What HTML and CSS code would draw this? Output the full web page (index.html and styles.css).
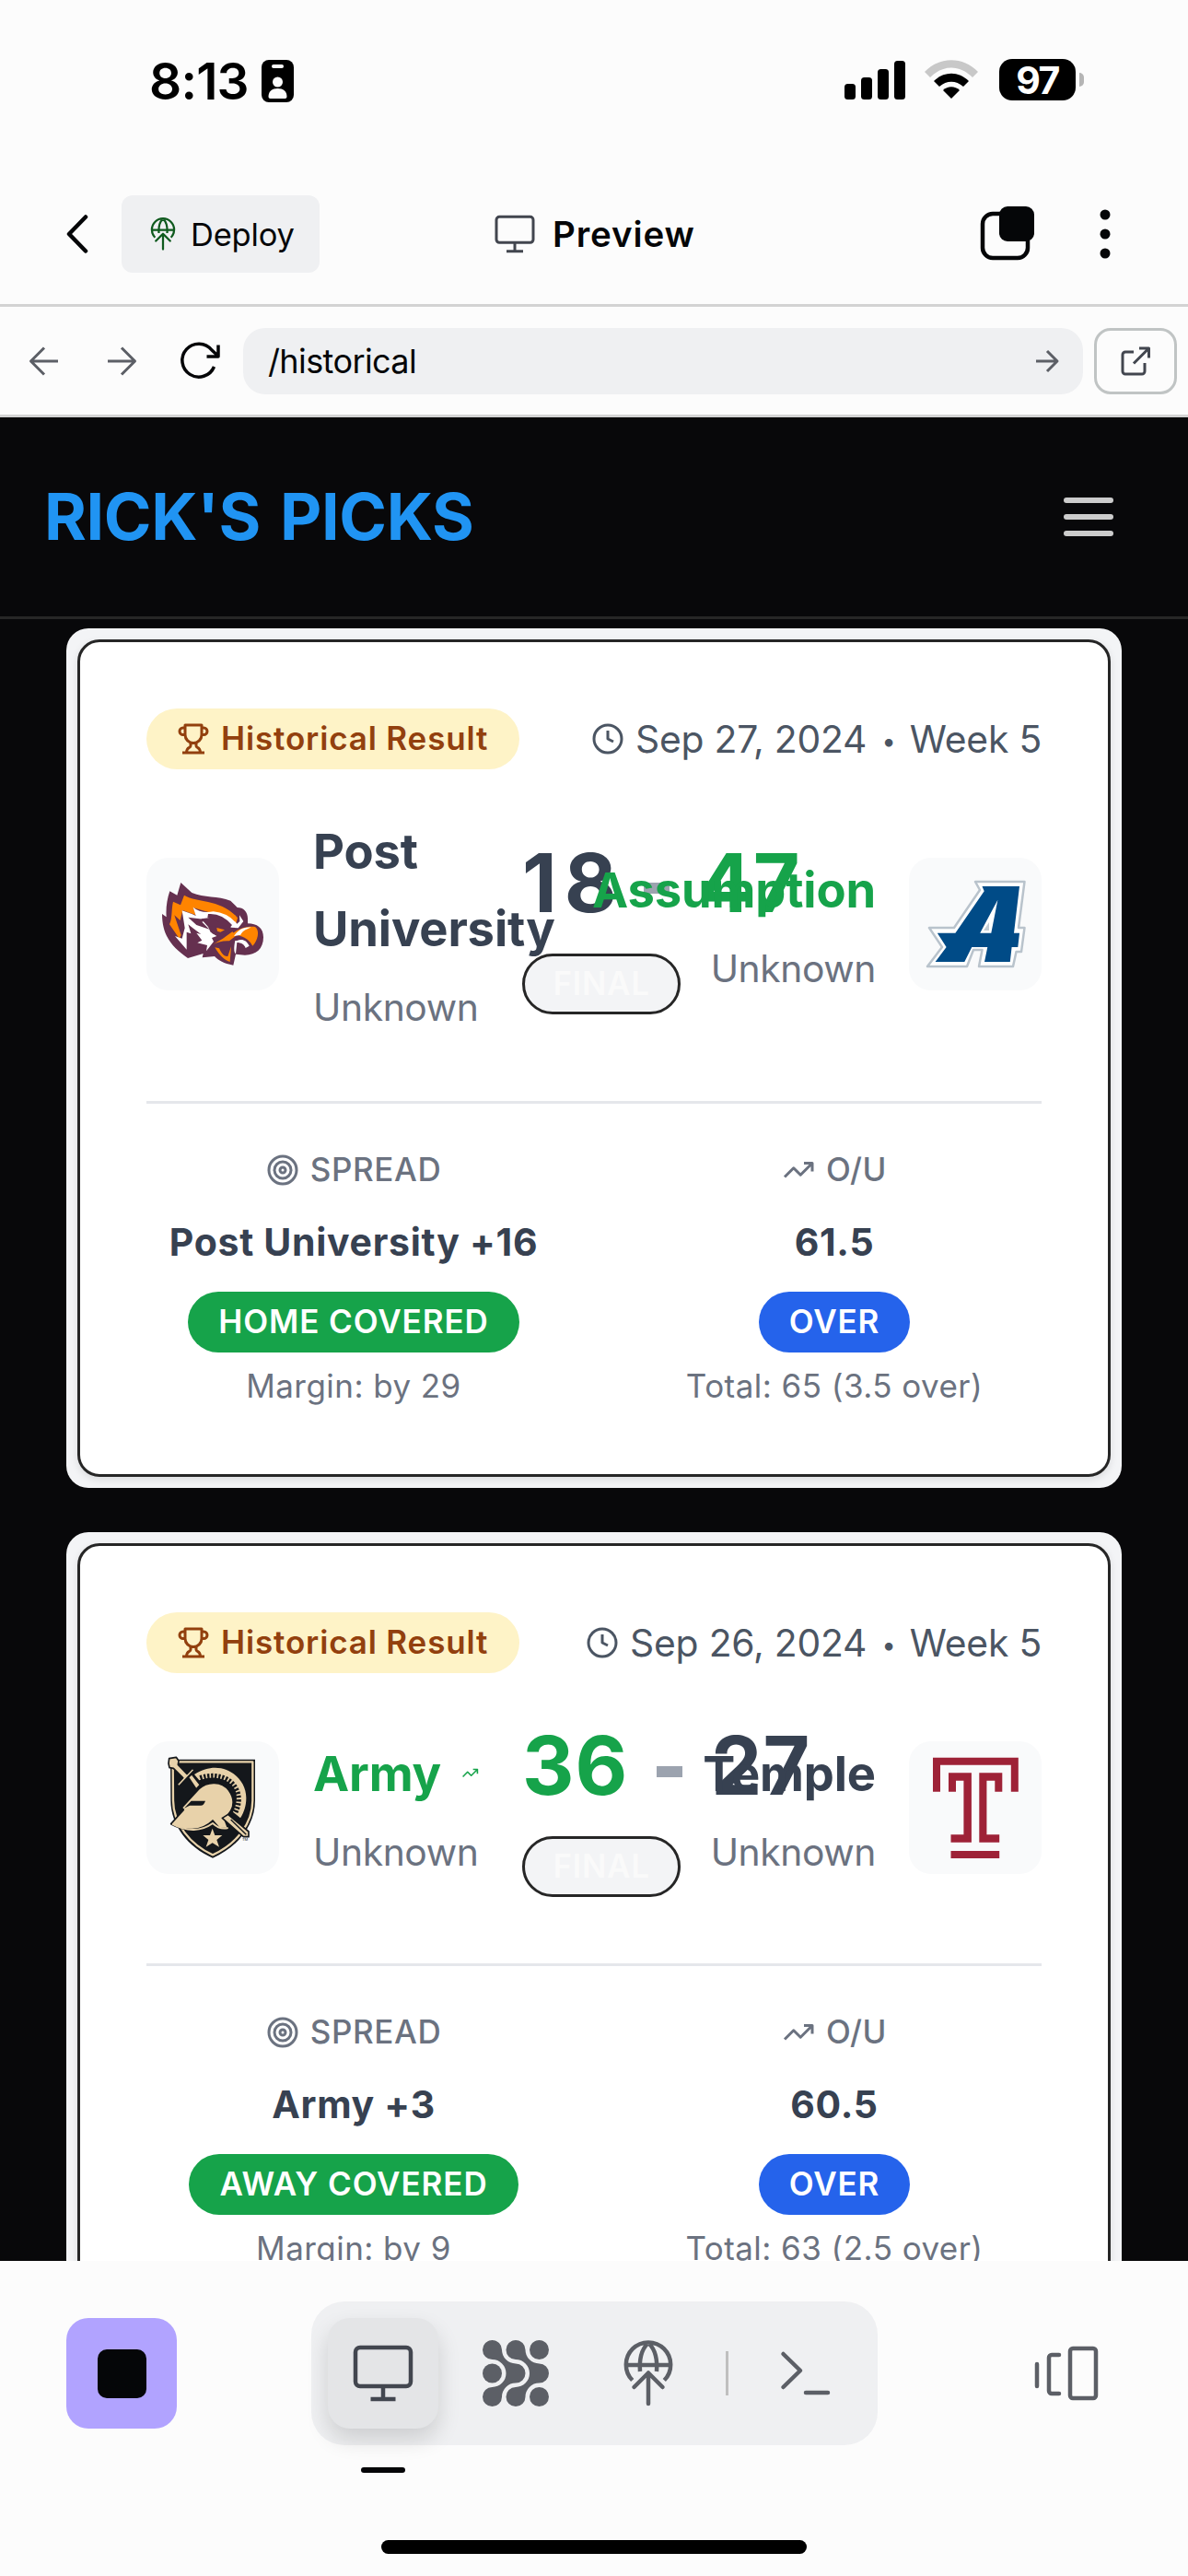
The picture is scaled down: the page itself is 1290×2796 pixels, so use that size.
FILE: index.html
```html
<!DOCTYPE html>
<html lang="en">
<head>
<meta charset="utf-8">
<title>Rick's Picks</title>
<link rel="stylesheet" href="styles.css">
</head>
<body>
<svg width="0" height="0" class="defs">
  <symbol id="trophy" viewBox="0 0 24 24"><path d="M6 9H4.5a2.5 2.5 0 0 1 0-5H6M18 9h1.5a2.500 2.500 0 0 0 0-5H18M4 22h16M10 14.660V17c0 .55-.47.98-.97 1.210C7.850 18.750 7 20.240 7 22M14 14.660V17c0 .55.47.98.97 1.210C16.150 18.750 17 20.240 17 22M18 2H6v7a6 6 0 0 0 12 0V2Z"/></symbol>
  <symbol id="clock" viewBox="0 0 24 24"><circle cx="12" cy="12" r="10"/><path d="M12 6v6l4 2"/></symbol>
  <symbol id="target" viewBox="0 0 24 24"><circle cx="12" cy="12" r="10"/><circle cx="12" cy="12" r="6"/><circle cx="12" cy="12" r="2"/></symbol>
  <symbol id="trend" viewBox="0 0 24 24"><path d="M22 7l-8.500 8.500-5-5L2 17M16 7h6v6"/></symbol>
  <symbol id="globe" viewBox="0 0 72 72"><path d="M18.700 43.500A24.200 24.200 0 1 1 53.300 43.500M12 27h48M35 4C29 10 26 20 27 34M37 4c6 6 9 16 8 30"/><path stroke-linecap="round" d="M36 69V35.500M20.500 51L36 35.500 51.500 51"/></symbol>
  <symbol id="monitor" viewBox="0 0 72 72"><rect x="6" y="8" width="60" height="42" rx="5"/><path d="M36 50v13M22.500 64h27"/></symbol>
</svg>

<div class="status">
  <div class="time">8:13
    <svg class="idcard" width="35" height="46" viewBox="0 0 35 46"><rect width="35" height="46" rx="8"/><rect x="11" y="5" width="13" height="4" rx="2" fill="#fcfcfc"/><circle cx="17.500" cy="24" r="5.500" fill="#fcfcfc"/><path d="M7.500 40c0-6 4-9 10-9s10 3 10 9c0 1-1 2-2 2h-16c-1 0-2-1-2-2z" fill="#fcfcfc"/></svg>
  </div>
  <div class="signals">
    <svg width="66" height="42" viewBox="0 0 66 42"><rect y="25" width="12" height="17" rx="3.500"/><rect x="18" y="18" width="12" height="24" rx="3.500"/><rect x="36" y="9" width="12" height="33" rx="3.500"/><rect x="54" width="12" height="42" rx="3.500"/></svg>
    <svg class="wifi" width="58" height="43" viewBox="0 0 58 43"><path fill="#c8c8c8" d="M0 13C16-4 42-4 58 13l-6 6C38 5 20 5 6 19z"/><path d="M10 23c11-11 27-11 38 0l-6 6c-8-7-18-7-26 0z"/><path d="M20 33c5-5 13-5 18 0l-9 9z"/></svg>
    <div class="battery">97</div><i class="nub"></i>
  </div>
</div>

<div class="toolbar">
  <svg class="back" width="24" height="42" viewBox="0 0 24 42"><path d="M21 2.500L3 21l18 18.500"/></svg>
  <div class="deploy"><svg class="g" width="36" height="36"><use href="#globe"/></svg><span>Deploy</span></div>
  <div class="preview"><svg width="48" height="48"><use href="#monitor"/></svg><span>Preview</span></div>
  <svg class="tabs" width="60" height="60" viewBox="0 0 60 60"><rect x="3" y="8" width="49" height="48" rx="11"/><rect x="21" y="0" width="38" height="38" rx="9" fill="#050608" stroke="none"/></svg>
  <svg class="dots" width="12" height="60" viewBox="0 0 12 60"><circle cx="6" cy="9" r="5.500"/><circle cx="6" cy="30" r="5.500"/><circle cx="6" cy="51" r="5.500"/></svg>
</div>

<div class="address">
  <svg class="a1" width="32" height="32" viewBox="0 0 32 32"><path d="M31 16H2M16 1.500L1.500 16 16 30.500"/></svg>
  <svg class="a2" width="32" height="32" viewBox="0 0 32 32"><path d="M1 16h29M16 1.500L30.500 16 16 30.500"/></svg>
  <svg class="a3" width="46" height="42" viewBox="0 0 46 42"><path d="M38.500 27A18 18 0 1 1 36 9L43 15.500M43 3.500V16H30.500"/></svg>
  <div class="field"><span>/historical</span><svg width="24" height="24" viewBox="0 0 24 24"><path d="M0 12h22M12 1l11 11-11 11"/></svg></div>
  <div class="open"><svg width="32" height="32" viewBox="0 0 32 32"><path d="M14 6H5a3 3 0 0 0-3 3v18a3 3 0 0 0 3 3h18a3 3 0 0 0 3-3v-9M20 2h10.500v10.500M30 2.500L14 18.500"/></svg></div>
</div>

<header class="site">
  <h1>RICK'S PICKS</h1>
  <div class="menu"><i></i><i></i><i></i></div>
</header>

<main>
  <section class="frame"><div class="card">
    <div class="top">
      <div class="badge"><svg width="36" height="36"><use href="#trophy"/></svg><span>Historical Result</span></div>
      <div class="date"><svg width="36" height="36"><use href="#clock"/></svg><span>Sep 27, 2024 <em>•</em> Week 5</span></div>
    </div>
    <div class="match tall">
      <div class="team">
        <div class="logo"><svg width="144" height="144" viewBox="27 33 432 432">
          <path fill="#65304f" d="M139 114l36 33c40 17 85 10 126 26l22 22c20 0 34 14 34 35v17c30 0 51 14 51 45 0 38-24 58-60 58l-30-3-8 36c-32-6-47-15-61-29l-40 4 3-13-50 15C110 324 78 286 78 216l14 10c-2-30 2-58 11-84l24 13z"/>
          <path fill="#ff8400" d="M150 155C188 180 272 166 324 229L318 250 290 228 180 196 188 220 145 204 137 237 118 220 140 285 134 296 102 250C112 230 108 200 114 176L138 187Z"/>
          <path fill="#fff" d="M143 205L175 216 188 222 179 194Q205 216 245 208Q292 212 322 248L331 240 330 220 343 240 326 262 303 260 270 236 235 228 205 232 228 258 236 275 256 288 240 294 246 306 222 337 225 318 193 310 208 302 190 278 205 282 176 260 163 250 172 280 158 275 158 332 120 288 143 296 152 262Z"/>
          <path fill="#65304f" d="M163 227L225 235 208 242 232 266 190 252ZM228 216Q272 212 306 252L298 262 282 260Q262 236 226 228ZM232 257L302 257 290 277 270 291 242 280Z"/>
          <path fill="#ff8400" d="M306 282C323 265 352 255 381 258C396 268 392 300 373 320C360 296 337 285 306 282ZM240 317L276 296 307 274 320 286 297 304C274 303 257 308 240 317ZM250 325L264 328C272 346 282 356 292 354L303 322 299 372C279 365 266 352 250 325ZM256 261L282 268 268 275 258 272Z"/>
          <path fill="#fff" d="M322 303C338 296 352 300 362 320L350 327C346 315 335 309 322 309L318 346C311 341 312 323 316 303ZM312 288C326 268 342 257 368 260C348 266 338 274 334 284Z"/>
        </svg></div>
        <div class="info"><div class="name">Post<br>University</div><div class="conf">Unknown</div></div>
      </div>
      <div class="score"><div class="nums"><span class="narrow">18</span><i></i><span class="win">47</span></div><div class="final">FINAL</div></div>
      <div class="team right">
        <div class="info"><div class="name win">Assumption</div><div class="conf">Unknown</div></div>
        <div class="logo"><svg width="144" height="144" viewBox="0 0 144 144">
          <path fill="#fff" stroke="#b9c3cc" stroke-width="2.500" d="M72 26H125.500L119 76H125.500L122 102H116.500L113 118H76L79.500 100H70L63 118H20L36 97 22 76H49L77 35Z"/>
          <path fill="#004b87" fill-rule="evenodd" d="M79.500 31H120L114 81.700H120L118.300 97H111.600L109.800 113H82L85.300 97H68.300L60.300 113H28.600L40.600 97 30.800 81.700H50.400L81.700 36.300ZM96.400 45.700L77.200 81.700H89.300Z"/><path fill="#c3ccd4" d="M87 70l-6 9h6z"/>
        </svg></div>
      </div>
    </div>
    <div class="stats">
      <div class="col"><div class="label"><svg width="36" height="36"><use href="#target"/></svg><span>SPREAD</span></div><div class="value">Post University +16</div><div class="pill green">HOME COVERED</div><div class="note">Margin: by 29</div></div>
      <div class="col"><div class="label"><svg width="36" height="36"><use href="#trend"/></svg><span>O/U</span></div><div class="value">61.5</div><div class="pill blue">OVER</div><div class="note">Total: 65 (3.5 over)</div></div>
    </div>
  </div></section>

  <section class="frame"><div class="card">
    <div class="top">
      <div class="badge"><svg width="36" height="36"><use href="#trophy"/></svg><span>Historical Result</span></div>
      <div class="date"><svg width="36" height="36"><use href="#clock"/></svg><span>Sep 26, 2024 <em>•</em> Week 5</span></div>
    </div>
    <div class="match">
      <div class="team">
        <div class="logo"><svg width="144" height="144" viewBox="27 30 432 432">
          <path fill="#14171b" d="M105 89H381V223C381 303 326 374 243 410C163 376 106 303 106 223Z"/>
          <path fill="none" stroke="#e8d2aa" stroke-width="7" d="M113 97H373V223C373 297 322 363 243 400C169 366 114 297 114 223Z"/>
          <path fill="#e8d2aa" d="M183 138C270 82 353 145 352 215c0 25-7 45-19 65l-24-20c29-60 2-104-55-111-22-1-38 3-55 8z"/>
          <path fill="none" stroke="#14171b" stroke-width="17" stroke-dasharray="7 5" d="M202 150c65-22 124 10 125 70 0 15-4 28-10 41"/>
          <path fill="#e8d2aa" stroke="#14171b" stroke-width="5" d="M107 299L148 253 142 246 198 185C226 158 273 160 295 189c23 32 17 65-14 92l12 33-28-1-22-25c-38 36-91 37-136 11z"/>
          <path fill="#14171b" d="M173 224h46c-3 9-8 15-15 15h-36l-18 9z"/>
          <path fill="none" stroke="#e8d2aa" stroke-width="6" d="M111 299c49 27 96 24 132-2 17 16 31 20 50 15"/>
          <path fill="#e8d2aa" stroke="#14171b" stroke-width="5" d="M101 86l23-4 8 12-2 12 29 30 17-18 8 5-51 54-7-6 20-22-31-31-13-2-3-14zM163 147l12-10 27 35-13 14zM274 280l19-12 67 56v17h-17z"/>
          <path stroke="#14171b" stroke-width="4" d="M302 285l50 49"/>
          <path fill="#e8d2aa" d="M242 314l8 22h24l-18 15 8 23-22-13-21 13 8-23-18-15h23z"/>
          <text x="339" y="355" font-family="Inter, sans-serif" font-size="12" fill="#14171b">TM</text>
        </svg></div>
        <div class="info"><div class="name win">Army<svg class="up" width="19" height="19"><use href="#trend"/></svg></div><div class="conf">Unknown</div></div>
      </div>
      <div class="score"><div class="nums"><span class="win">36</span><i></i><span>27</span></div><div class="final">FINAL</div></div>
      <div class="team right">
        <div class="info"><div class="name">Temple</div><div class="conf">Unknown</div></div>
        <div class="logo"><svg width="144" height="144" viewBox="0 0 144 144"><path fill="#9e2237" d="M26 17.700H118.800V54.700H110.800V25.700H34V54.700H26ZM43 34.300H67.900V109.700H45.500V101.300H59.400V42.700H51V54.700H43ZM76.300 34.300H101.300V54.700H93.300V42.700H84.400V101.300H98.200V109.700H76.300ZM45.500 119H98.200V127H45.500Z"/></svg></div>
      </div>
    </div>
    <div class="stats">
      <div class="col"><div class="label"><svg width="36" height="36"><use href="#target"/></svg><span>SPREAD</span></div><div class="value">Army +3</div><div class="pill green">AWAY COVERED</div><div class="note">Margin: by 9</div></div>
      <div class="col"><div class="label"><svg width="36" height="36"><use href="#trend"/></svg><span>O/U</span></div><div class="value">60.5</div><div class="pill blue">OVER</div><div class="note">Total: 63 (2.5 over)</div></div>
    </div>
  </div></section>
</main>

<footer>
  <div class="stop"><i></i></div>
  <div class="dock">
    <div class="item active"><svg width="72" height="72"><use href="#monitor"/></svg><b></b></div>
    <div class="item"><svg class="solid" width="72" height="72" viewBox="0 0 72 72"><path id="link" d="M21 10.500A15 15 0 0 0 36 25.500A10.500 10.500 0 0 1 36 46.500A15 15 0 0 0 21 61.500A10.500 10.500 0 1 1 10.500 51A15 15 0 0 0 10.500 21A10.500 10.500 0 1 1 21 10.500Z"/><use href="#link" x="25.500"/><circle cx="10.500" cy="36" r="10.500"/><circle cx="61.500" cy="10.500" r="10.500"/><circle cx="61.500" cy="61.500" r="10.500"/></svg></div>
    <div class="item"><svg width="72" height="72"><use href="#globe"/></svg></div>
    <span class="sep"></span>
    <div class="item"><svg width="72" height="72" viewBox="0 0 72 72"><path stroke-linecap="round" d="M11.500 15L30 33 11.500 51M36 57h24"/></svg></div>
  </div>
  <svg class="panels" width="70" height="60" viewBox="0 0 70 60"><path d="M3 20v24M27 10H19a3 3 0 0 0-3 3V49a3 3 0 0 0 3 3h8"/><rect x="39" y="3" width="28" height="54" rx="3"/></svg>
  <div class="home"></div>
</footer>
</body>
</html>
```
FILE: styles.css
```css
* { box-sizing: border-box; }
body { margin: 0; width: 1290px; height: 2796px; overflow: hidden; display: flex; flex-direction: column; background: #fcfcfc; font-family: Inter, "Liberation Sans", sans-serif; color: #050608; }
svg { display: block; flex: none; fill: none; stroke: currentColor; stroke-width: 2; stroke-linejoin: round; overflow: visible; }
.defs { position: absolute; }

.status { height: 212px; flex: none; display: flex; justify-content: space-between; align-items: flex-start; padding: 64px 113px 0 162px; color: #000; }
.status svg { fill: #000; stroke: none; }
.time { display: flex; gap: 14px; font-size: 55px; line-height: 48px; font-weight: 600; letter-spacing: -.8px; }
.idcard { margin-top: 1px; }
.signals { display: flex; align-items: center; height: 45px; }
.wifi { margin: 0 23px 0 21px; }
.battery { width: 83px; height: 45px; border-radius: 14px; background: #000; color: #fff; font-size: 41px; line-height: 46px; font-weight: 700; text-align: center; letter-spacing: -1.500px; }
.nub { width: 5px; height: 15px; margin-left: 4px; background: #b5b5b5; border-radius: 0 5px 5px 0; }

.toolbar { height: 121px; flex: none; display: flex; align-items: flex-start; padding: 0 84px 0 73px; border-bottom: 3px solid #d3d3d3; }
.back { margin: 21px 36px 0 -1px; stroke-width: 4.500; stroke-linecap: round; }
.deploy { width: 215px; height: 84px; display: flex; align-items: center; padding-left: 27px; gap: 12px; background: #eff0f2; border-radius: 12px; font-size: 34.500px; letter-spacing: -.2px; }
.deploy .g { color: #0f5a1e; stroke-width: 4.500; }
.preview { margin-left: 188px; height: 84px; display: flex; align-items: center; gap: 17px; font-size: 38.500px; font-weight: 600; letter-spacing: .9px; }
.preview svg { color: #42464f; stroke-width: 4.500; }
.tabs { margin: 12px 70px 0 auto; stroke-width: 4.500; }
.dots { margin-top: 12px; }
.dots circle { fill: #050608; stroke: none; }

.address { height: 120px; flex: none; display: flex; align-items: center; padding: 0 12px 0 32px; border-bottom: 3px solid #d3d3d3; }
.address svg { stroke-width: 3; color: #5c5f66; }
.address .a1 { margin-right: 52px; }
.address .a2 { margin-right: 46px; }
.address .a3 { margin-right: 24px; color: #050608; stroke-width: 3.500; }
.field { width: 912px; height: 72px; margin-right: 12px; padding: 0 27px; display: flex; align-items: center; justify-content: space-between; background: #eff0f2; border-radius: 24px; font-size: 36px; letter-spacing: -.6px; }
.open { width: 90px; height: 72px; display: grid; place-items: center; border: 3px solid #c0c4c4; border-radius: 18px; }
.open svg { color: #42464f; }

.site { height: 219px; flex: none; display: flex; align-items: center; justify-content: space-between; padding: 0 81px 0 48px; background: #08080a; border-bottom: 3px solid #272727; }
h1 { margin: 0; font-size: 70px; line-height: 96px; font-weight: 700; word-spacing: 5px; letter-spacing: -.4px; color: #2094f3; }
.menu { display: flex; flex-direction: column; gap: 12px; }
.menu i { width: 54px; height: 6px; border-radius: 3px; background: #ccc; }

main { height: 1782px; flex: none; overflow: hidden; padding: 10px 72px 0; display: flex; flex-direction: column; gap: 48px; background: #08080a; }
.frame { flex: none; padding: 12px; border-radius: 24px; background: #f3f4f6; }
.card { padding: 72px; border: 3px solid #262626; border-radius: 24px; background: #fff; box-shadow: 0 3px 9px rgba(0,0,0,.1); }
.top { display: flex; justify-content: space-between; align-items: center; height: 66px; }
.badge { display: flex; align-items: center; gap: 12px; width: 405px; height: 66px; padding-left: 33px; border-radius: 33px; background: #fef3c7; color: #92400e; font-size: 35px; font-weight: 600; letter-spacing: .85px; white-space: nowrap; }
.badge span, .pill, .label span { padding-bottom: 2px; }
.date { display: flex; align-items: center; gap: 12px; font-size: 40.800px; letter-spacing: -.2px; color: #4b5563; white-space: nowrap; }
.date em { font-style: normal; font-size: 27px; margin: 0 4px 0 5px; vertical-align: 3px; }
.match { height: 195px; margin: 48px 0 72px; display: grid; grid-template-columns: 384px 172px 368px; column-gap: 24px; align-items: center; }
.match.tall { height: 240px; }
.team { display: flex; align-items: center; gap: 37px; }
.team.right { justify-content: flex-end; text-align: right; gap: 36px; }
.logo { flex: none; width: 144px; height: 144px; border-radius: 24px; background: #f9fafb; }
.logo svg { stroke: none; }
.info { white-space: nowrap; width: 204px; display: flex; flex-direction: column; }
.right .info { align-items: flex-end; }
.name { display: flow-root; margin-top: -1px; font-size: 52.500px; line-height: 84px; font-weight: 700; letter-spacing: -.15px; color: #374151; }
.conf { margin-top: 13px; font-size: 40.800px; line-height: 60px; letter-spacing: -.4px; color: #6b7280; }
.up { display: inline-block; margin-left: 22px; vertical-align: 10px; }
.score { display: flex; flex-direction: column; gap: 23px; }
.nums { display: flex; align-items: center; height: 106px; gap: 31px; font-size: 87.500px; line-height: 104px; font-weight: 700; letter-spacing: 1px; color: #374151; white-space: nowrap; }
.nums span { padding-bottom: 2px; }
.nums i { flex: none; width: 28px; height: 12px; margin-top: 11px; background: #9ca3af; }
.nums .narrow { letter-spacing: 8px; margin-right: -10px; }
.name.win, .nums .win { color: #16a34a; }
.final { width: 172px; height: 66px; border: 3px solid #262626; border-radius: 33px; background: #f3f4f6; color: #fafafa; font-size: 35px; line-height: 59px; font-weight: 600; letter-spacing: .6px; text-align: center; }
.stats { display: grid; grid-template-columns: 450px 450px; column-gap: 72px; border-top: 3px solid #e5e7eb; padding-top: 48px; }
.col { display: flex; flex-direction: column; align-items: center; white-space: nowrap; }
.label { display: flex; align-items: center; gap: 12px; height: 48px; font-size: 35px; font-weight: 500; letter-spacing: .6px; color: #6b7280; }
.value { margin: 24px 0; font-size: 41px; line-height: 60px; font-weight: 700; letter-spacing: .7px; color: #374151; }
.pill { height: 66px; padding: 0 33px; border-radius: 33px; color: #fff; font-size: 35px; line-height: 65px; font-weight: 600; letter-spacing: .9px; }
.green { background: #16a34a; }
.blue { background: #2563eb; }
.note { margin-top: 12px; font-size: 35px; line-height: 48px; letter-spacing: .45px; color: #6b7280; }

footer { position: relative; height: 342px; flex: none; display: flex; align-items: flex-start; padding: 44px 97px 0 72px; color: #5c5f66; }
.stop { width: 120px; height: 120px; margin: 18px 146px 0 0; display: grid; place-items: center; background: #b1a3ff; border-radius: 24px; }
.stop i { width: 53px; height: 53px; border-radius: 10px; background: #050608; }
.dock { height: 156px; padding: 18px; display: flex; align-items: center; gap: 24px; border-radius: 36px; background: #eff0f2; }
.item { position: relative; width: 120px; height: 120px; display: grid; place-items: center; border-radius: 24px; }
.item svg { stroke-width: 4.500; }
.item .solid { fill: currentColor; stroke: none; }
.active { background: #e4e5e7; color: #42464f; box-shadow: 0 12px 24px rgba(0,0,0,.14); }
.active b { position: absolute; left: 36px; top: 162px; width: 48px; height: 6px; border-radius: 3px; background: #050608; }
.sep { width: 3px; height: 48px; background: #bfbfbf; }
.panels { margin: 48px 0 0 auto; stroke-width: 4.500; stroke-linecap: round; }
.home { position: absolute; left: 414px; bottom: 24px; width: 462px; height: 15px; border-radius: 8px; background: #000; }
```
